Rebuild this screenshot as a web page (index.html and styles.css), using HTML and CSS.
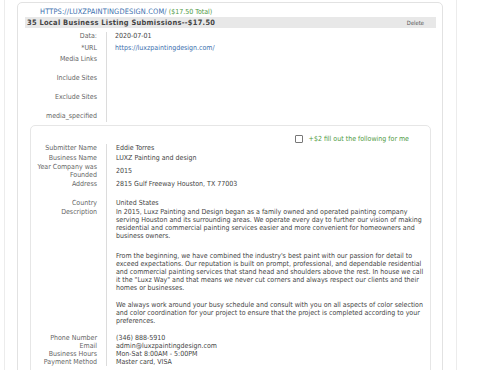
FILE: index.html
```html
<!DOCTYPE html>
<html>
<head>
<meta charset="utf-8">
<link rel="stylesheet" href="styles.css">
</head>
<body>
<div class="wrapper">
  <div class="card">
    <div class="card-title"><a class="site-link" href="#">HTTPS://LUXZPAINTINGDESIGN.COM/</a> <span class="total">($17.50 Total)</span></div>
    <div class="bar">
      <span class="bar-title">35 Local Business Listing Submissions--$17.50</span>
      <span class="bar-action">Delete</span>
    </div>
    <div class="details outer-details">
      <div class="label r1">Data:</div><div class="value r1">2020-07-01</div>
      <div class="label r2">*URL</div><div class="value r2"><a class="url" href="#">https://luxzpaintingdesign.com/</a></div>
      <div class="label r3">Media Links</div><div class="value r3"></div>
      <div class="label r3">Include Sites</div><div class="value r3"></div>
      <div class="label r3">Exclude Sites</div><div class="value r3"></div>
      <div class="label r4">media_specified</div><div class="value r4"></div>
    </div>
    <div class="inner-card">
      <div class="fill-row">
        <span class="checkbox"></span>
        <span class="fill-text">+$2 fill out the following for me</span>
      </div>
      <div class="details inner-details">
        <div class="label first">Submitter Name</div><div class="value first">Eddie Torres</div>
        <div class="label">Business Name</div><div class="value">LUXZ Painting and design</div>
        <div class="label two-line">Year Company was Founded</div><div class="value mid">2015</div>
        <div class="label">Address</div><div class="value gap">2815 Gulf Freeway Houston, TX 77003</div>
        <div class="label country">Country</div><div class="value country">United States</div>
        <div class="label">Description</div>
        <div class="value desc">
          <p>In 2015, Luxz Painting and Design began as a family owned and operated painting company serving Houston and its surrounding areas. We operate every day to further our vision of making residential and commercial painting services easier and more convenient for homeowners and business owners.</p>
          <p>From the beginning, we have combined the industry's best paint with our passion for detail to exceed expectations. Our reputation is built on prompt, professional, and dependable residential and commercial painting services that stand head and shoulders above the rest. In house we call it the "Luxz Way" and that means we never cut corners and always respect our clients and their homes or businesses.</p>
          <p>We always work around your busy schedule and consult with you on all aspects of color selection and color coordination for your project to ensure that the project is completed according to your preferences.</p>
        </div>
        <div class="label">Phone Number</div><div class="value">(346) 888-5910</div>
        <div class="label">Email</div><div class="value">admin@luxzpaintingdesign.com</div>
        <div class="label">Business Hours</div><div class="value">Mon-Sat 8:00AM - 5:00PM</div>
        <div class="label">Payment Method</div><div class="value">Master card, VISA</div>
      </div>
    </div>
  </div>
</div>
</body>
</html>
```

FILE: styles.css
```css
html, body {
  margin: 0;
  padding: 0;
  background: #ffffff;
}
body {
  font-family: "DejaVu Sans Condensed", "DejaVu Sans", sans-serif;
  font-size: 7px;
  line-height: 8px;
  color: #444;
  height: 370px;
  overflow: hidden;
}
.wrapper {
  margin-left: 4px;
  width: 453px;
  height: 380px;
  border-left: 1px solid #ececec;
  border-right: 1px solid #ececec;
  padding: 2px 0 0 12px;
  box-sizing: border-box;
}
.card {
  width: 426px;
  border: 1px solid #e2e2e2;
  border-radius: 5px;
  padding: 0 6px 0 7px;
  box-sizing: border-box;
  height: 400px;
}
.card-title {
  padding: 5px 0 0 15px;
  height: 14px;
  box-sizing: border-box;
  font-size: 7.4px;
}
.site-link {
  color: #3b6fae;
  text-decoration: none;
  letter-spacing: 0.15px;
}
.total {
  color: #4f9a3f;
  font-size: 7px;
}
.bar {
  background: #e8e8e8;
  height: 11px;
  display: flex;
  align-items: center;
  justify-content: space-between;
  padding: 0 12px 0 2px;
}
.bar-title {
  font-weight: bold;
  color: #444;
  font-size: 7.4px;
  letter-spacing: 0.3px;
}
.bar-action {
  font-size: 5.8px;
  color: #555;
}
.details {
  display: grid;
  grid-template-columns: 81px 1fr;
}
.outer-details {
  margin-top: 4px;
}
.label {
  text-align: right;
  color: #666;
  padding-right: 9px;
}
.value {
  border-left: 1px solid #dcdcdc;
  padding-left: 8px;
  color: #444;
}
.outer-details .r1 { height: 12px; }
.outer-details .r2 { height: 11px; }
.outer-details .r3 { height: 19px; }
.outer-details .r4 { height: 10px; }
.url {
  color: #3b6fae;
  text-decoration: none;
}
.inner-card {
  margin: 3px 0 0 5px;
  width: 401px;
  border: 1px solid #e6e6e6;
  border-radius: 5px;
  height: 260px;
  box-sizing: border-box;
}
.fill-row {
  display: flex;
  justify-content: flex-end;
  align-items: center;
  gap: 6px;
  padding: 7px 21px 0 0;
  height: 18px;
  box-sizing: border-box;
}
.checkbox {
  width: 6px;
  height: 6px;
  border: 1px solid #777;
  border-radius: 1px;
  background: #fff;
}
.fill-text {
  color: #4f9a3f;
}
.inner-details {
  grid-template-columns: 75px 1fr;
  margin-top: 0;
}
.inner-details .value {
  padding-left: 9px;
  padding-right: 1px;
}
.inner-details .first {
  padding-bottom: 2px;
}
.inner-details .two-line {
  padding-top: 1px;
  padding-bottom: 1px;
}
.inner-details .country {
  padding-bottom: 1px;
}
.value.mid {
  align-self: stretch;
  display: flex;
  align-items: center;
}
.value.gap {
  padding-bottom: 11px;
}
.desc p {
  margin: 0 0 12px 0;
}
.desc p:nth-child(2) {
  margin-bottom: 9px;
}
.desc p:last-child {
  margin-bottom: 9px;
}
```
